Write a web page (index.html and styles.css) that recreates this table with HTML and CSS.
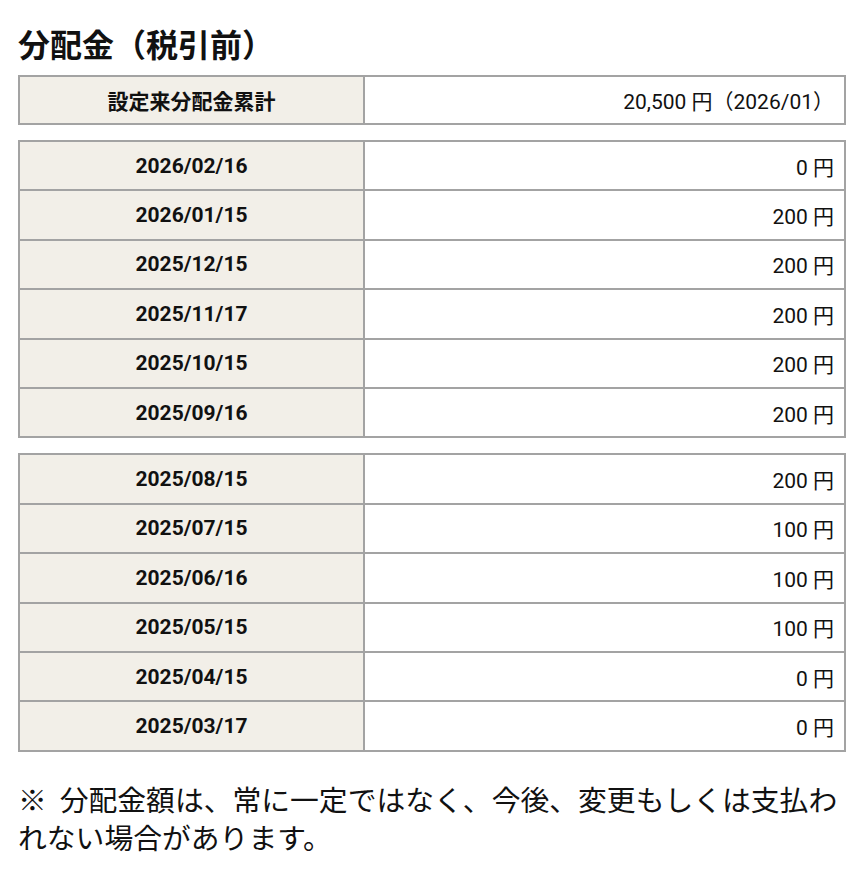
FILE: index.html
```html
<!DOCTYPE html>
<html lang="ja">
<head>
<meta charset="utf-8">
<link rel="stylesheet" href="styles.css">
</head>
<body>
<h1 class="title">分配金（税引前）</h1>
<table class="dist summary">
  <tr><th>設定来分配金累計</th><td>20,500 円（2026/01）</td></tr>
</table>
<table class="dist">
  <tr><th>2026/02/16</th><td>0 円</td></tr>
  <tr><th>2026/01/15</th><td>200 円</td></tr>
  <tr><th>2025/12/15</th><td>200 円</td></tr>
  <tr><th>2025/11/17</th><td>200 円</td></tr>
  <tr><th>2025/10/15</th><td>200 円</td></tr>
  <tr><th>2025/09/16</th><td>200 円</td></tr>
</table>
<table class="dist">
  <tr><th>2025/08/15</th><td>200 円</td></tr>
  <tr><th>2025/07/15</th><td>100 円</td></tr>
  <tr><th>2025/06/16</th><td>100 円</td></tr>
  <tr><th>2025/05/15</th><td>100 円</td></tr>
  <tr><th>2025/04/15</th><td>0 円</td></tr>
  <tr><th>2025/03/17</th><td>0 円</td></tr>
</table>
<p class="note">※&nbsp;&nbsp;分配金額は、常に一定ではなく、今後、変更もしくは支払われない場合があります。</p>
</body>
</html>
```
FILE: styles.css
```css
html, body {
  margin: 0;
  background: #fff;
}
body {
  padding: 24px 18px 0 18px;
  font-family: Roboto, "Noto Sans CJK JP", sans-serif;
  color: #111;
  text-spacing-trim: space-all;
}
.title {
  margin: 0 0 13px 0;
  font-size: 32px;
  line-height: 38px;
  font-weight: 700;
  font-family: "Noto Sans CJK JP", sans-serif;
}
.dist {
  width: 828px;
  border-collapse: separate;
  border-spacing: 0;
  border-top: 2px solid #a3a3a3;
  border-left: 2px solid #a3a3a3;
  margin-bottom: 15px;
}
.dist th, .dist td {
  box-sizing: border-box;
  border-right: 2px solid #a3a3a3;
  border-bottom: 2px solid #a3a3a3;
  height: 49.4px;
  padding: 0 10px;
  font-size: 21px;
}
.summary th, .summary td {
  height: 48px;
}
.dist th {
  width: 345px;
  background: #f2efe8;
  font-weight: 700;
  text-align: center;
}
.dist td {
  text-align: right;
  font-weight: 400;
}
.note {
  margin: 28px 0 0 0;
  font-size: 28.8px;
  line-height: 38px;
  width: 828px;
  font-family: "Noto Sans CJK JP", sans-serif;
}
```
